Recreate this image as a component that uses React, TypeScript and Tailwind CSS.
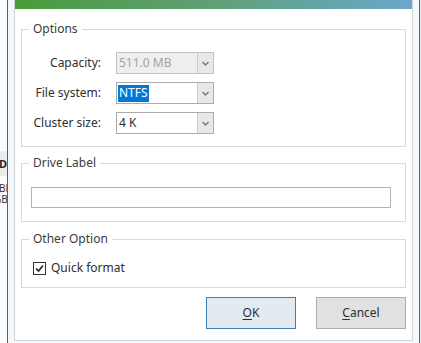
import clsx from 'clsx';

function Chevron() {
  return (
    <svg width="9" height="9" viewBox="0 0 9 9">
      <path d="M1.5 3 L4.5 6 L7.5 3" fill="none" stroke="#7a7a7a" strokeWidth="1.5" />
    </svg>
  );
}

function Combo({ value, disabled, selected }: { value: string; disabled?: boolean; selected?: boolean }) {
  return (
    <div
      className={clsx(
        'flex h-[22px] w-[98px] border',
        disabled ? 'border-[#c2c2c2] bg-[#efefef]' : 'border-[#acacac] bg-white'
      )}
    >
      <div className="flex flex-1 items-center pl-[1px]">
        <span
          className={clsx(
            'flex h-[17px] items-center px-[1px] leading-[16px]',
            selected && 'bg-[#0078d7] text-white',
            disabled && 'text-[#a3a3a3]'
          )}
        >
          {value}
        </span>
      </div>
      <div className="flex w-[16px] items-center justify-center border-l border-[#cdcdcd] bg-[#e8e8e8]">
        <Chevron />
      </div>
    </div>
  );
}

function Group({ title, className, children }: { title: string; className?: string; children: React.ReactNode }) {
  return (
    <fieldset className={clsx('border border-[#d9d9d9]', className)}>
      <legend className="ml-[7px] px-[4px] text-[12px] leading-[16px] text-[#3c3c3c]">{title}</legend>
      {children}
    </fieldset>
  );
}

export default function App() {
  return (
    <div className="flex h-[343px] w-[421px] overflow-hidden bg-white font-['Noto_Sans',sans-serif] text-[12px] text-[#2e2e2e]">
      {/* window behind the dialog */}
      <div className="flex w-[7px] flex-col overflow-hidden whitespace-nowrap bg-[#fbfbfb]">
        <div className="h-[151px]" />
        <div className="flex h-[25px] items-center bg-[#ebebeb] text-[11px] font-bold leading-[14px] text-[#222]">
          <span className="-ml-[1px]">Disk</span>
        </div>
        <div className="mt-[7px] -ml-[10px] text-[10px] leading-[11px] text-[#333]">MBR</div>
        <div className="-ml-[6px] text-[10px] leading-[11px] text-[#333]">GB</div>
      </div>

      {/* dialog */}
      <div className="flex w-[413px] border-x border-[#2c6e94] bg-[#f4f8fb] px-[6px] pb-[2px]">
        <div className="flex w-[399px] flex-col border-x border-b border-[#cfd4d8] bg-white">
          <div className="h-[9px] bg-gradient-to-r from-[#4a9a38] via-[#5fa076] to-[#6ba7cc]" />
          <div className="flex flex-1 flex-col px-[6px]">
            <Group title="Options" className="mt-[12px] pb-[12px]">
              <div className="grid grid-cols-[79px_98px] items-center gap-x-[15px] gap-y-[8px] pt-[15px]">
                <span className="text-right">Capacity:</span>
                <Combo value="511.0 MB" disabled />
                <span className="text-right">File system:</span>
                <Combo value="NTFS" selected />
                <span className="text-right">Cluster size:</span>
                <Combo value="4 K" />
              </div>
            </Group>

            <Group title="Drive Label" className="mt-[8px] pb-[13px]">
              <div className="ml-[9px] mt-[16px] h-[21px] w-[360px] border border-[#b4b4b4] bg-white" />
            </Group>

            <Group title="Other Option" className="mt-[9px] pb-[11px]">
              <label className="ml-[11px] mt-[13px] flex h-[16px] items-center gap-[5px]">
                <span className="flex h-[13px] w-[13px] items-center justify-center border border-[#333] bg-white">
                  <svg width="11" height="11" viewBox="0 0 11 11">
                    <path d="M2 5.5 L4.5 8 L9 2.5" fill="none" stroke="#222" strokeWidth="1.6" />
                  </svg>
                </span>
                <span className="leading-[16px]">Quick format</span>
              </label>
            </Group>

            <div className="mt-[9px] flex justify-end gap-[20px] pb-[11px]">
              <button className="h-[32px] w-[90px] border border-[#3d7fb5] bg-[#e3eaf0] text-[12px] text-[#2e2e2e]">
                <span className="underline underline-offset-2">O</span>K
              </button>
              <button className="h-[32px] w-[90px] border border-[#adadad] bg-[#e1e1e1] text-[12px] text-[#2e2e2e]">
                <span className="underline underline-offset-2">C</span>ancel
              </button>
            </div>
          </div>
        </div>
      </div>
      <div className="w-[1px] bg-[#e9eef2]" />
    </div>
  );
}
